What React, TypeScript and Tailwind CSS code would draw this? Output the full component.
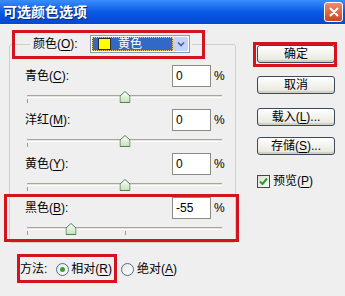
import React from "react";

function Key({ children }: { children: React.ReactNode }) {
  return <span className="underline underline-offset-[2px]">{children}</span>;
}

function RedFrame({ className }: { className: string }) {
  return <div className={`pointer-events-none absolute border-[3px] border-[#d3131d] ${className}`} />;
}

function Thumb() {
  return (
    <svg width="11" height="12" viewBox="0 0 11 12">
      <defs>
        <linearGradient id="th" x1="0" y1="0" x2="0" y2="1">
          <stop offset="0" stopColor="#ffffff" />
          <stop offset="1" stopColor="#bfe3b4" />
        </linearGradient>
      </defs>
      <path d="M5.5 0.5 L10.5 5 L10.5 11.5 L0.5 11.5 L0.5 5 Z" fill="url(#th)" stroke="#5d7a5d" />
    </svg>
  );
}

function Slider({ value }: { value: number }) {
  const pct = 50 + value / 2;
  return (
    <div className="relative ml-[17px] mr-[13px] h-[22px]">
      <div className="absolute inset-x-0 top-[8px] h-[3px] border-t border-b border-t-[#a7a69e] border-b-white bg-[#e4e3dc]" />
      <div className="absolute left-0 top-[12px] h-[4px] w-px bg-[#9a9a92]" />
      <div className="absolute left-1/2 top-[12px] h-[4px] w-px bg-[#9a9a92]" />
      <div className="absolute top-[4px] -translate-x-1/2" style={{ left: `${pct}%` }}>
        <Thumb />
      </div>
    </div>
  );
}

function Channel({ name, k, value }: { name: string; k: string; value: number }) {
  return (
    <div>
      <div className="flex h-[22px] items-center pl-[15px]">
        <span className="flex-1">
          {name}(<Key>{k}</Key>):
        </span>
        <div className="flex h-[22px] w-[39px] items-center border border-[#8c8c86] bg-white pl-[3px]">{value}</div>
        <span className="w-[24px] pl-[3px]">%</span>
      </div>
      <Slider value={value} />
    </div>
  );
}

function Button({ children }: { children: React.ReactNode }) {
  return (
    <div className="flex h-[18px] w-[78px] items-center justify-center rounded-[3px] border border-[#3c4a5c] bg-gradient-to-b from-white to-[#e6e5dc] shadow-[inset_0_-2px_0_#d2d0c3]">
      {children}
    </div>
  );
}

function Radio({ checked }: { checked?: boolean }) {
  return (
    <div className="flex h-[13px] w-[13px] items-center justify-center rounded-full border border-[#4d6e8c] bg-gradient-to-br from-[#e8e7e0] to-white">
      {checked && <div className="h-[5px] w-[5px] rounded-full bg-[#3c9a3c]" />}
    </div>
  );
}

export default function App() {
  const channels = [
    { name: "青色", k: "C", value: 0 },
    { name: "洋红", k: "M", value: 0 },
    { name: "黄色", k: "Y", value: 0 },
  ];

  return (
    <div className="relative flex h-[296px] w-[345px] flex-col overflow-hidden bg-[#efefef] font-['Liberation_Sans','Noto_Sans_CJK_SC',sans-serif] text-[12px] text-black">
      <div className="flex h-[25px] items-center justify-between border-b border-[#f6f6f6] bg-gradient-to-b from-[#3a8dfb] via-[#0a58e6] to-[#0448d2] pl-[3px] pr-[2px]">
        <span className="text-[14px] font-bold text-white [text-shadow:1px_1px_0_#0a2a7a]">可选颜色选项</span>
        <div className="flex h-[20px] w-[19px] items-center justify-center rounded-[3px] border border-white bg-gradient-to-b from-[#ee8a6a] to-[#cc4220]">
          <svg width="10" height="10" viewBox="0 0 10 10">
            <path d="M1.5 1.5 L8.5 8.5 M8.5 1.5 L1.5 8.5" stroke="white" strokeWidth="2" strokeLinecap="round" />
          </svg>
        </div>
      </div>

      <div className="flex">
        <div className="w-[236px] pl-[9px]">
          <div className="relative mt-[19px] rounded-[3px] border border-[#cfcfc6] pb-[1px]">
            <div className="-mt-[10px] flex h-[18px] items-center">
              <div className="ml-[20px] flex h-[18px] items-center bg-[#efefef] pl-[3px] pr-[2px]">
                <span className="w-[57px]">
                  颜色(<Key>O</Key>):
                </span>
                <div className="flex h-[18px] w-[100px] items-center border border-[#7f9db9] bg-white p-px">
                  <div className="flex h-full flex-1 items-center border border-dotted border-[#f4c26a] bg-[#316ac5] pl-[5px] text-white">
                    <div className="h-[12px] w-[13px] border border-[#2a2a2a] bg-[#ffff00]" />
                    <span className="ml-[7px]">黄色</span>
                  </div>
                  <div className="flex h-full w-[15px] items-center justify-center rounded-[2px] bg-[#c3d3fd]">
                    <svg width="8" height="6" viewBox="0 0 8 6">
                      <path d="M1 1.5 L4 4.5 L7 1.5" fill="none" stroke="#4d6185" strokeWidth="1.6" />
                    </svg>
                  </div>
                </div>
              </div>
            </div>
            <RedFrame className="left-[2px] -top-[15px] h-[29px] w-[193px]" />
            <div className="mt-[12px]">
              {channels.map((c) => (
                <Channel key={c.k} name={c.name} k={c.k} value={c.value} />
              ))}
              <div className="relative">
                <div className="flex h-[22px] items-center pl-[15px]">
                  <span className="flex-1">
                    黑色(<Key>B</Key>):
                  </span>
                  <div className="flex h-[22px] w-[39px] items-center border border-[#8c8c86] bg-white pl-[3px]">-55</div>
                  <span className="w-[24px] pl-[3px]">%</span>
                </div>
                <Slider value={-55} />
                <RedFrame className="-left-[6px] -top-[3px] -right-[4px] -bottom-[1px]" />
              </div>
            </div>
          </div>

          <div className="relative ml-[11px] mt-[16px] flex h-[20px] items-center">
            <span>方法:</span>
            <div className="ml-[9px]">
              <Radio checked />
            </div>
            <span className="ml-[2px]">
              相对(<Key>R</Key>)
            </span>
            <div className="ml-[9px]">
              <Radio />
            </div>
            <span className="ml-[3px]">
              绝对(<Key>A</Key>)
            </span>
            <RedFrame className="-left-[3px] -top-[5px] h-[29px] w-[100px]" />
          </div>
        </div>

        <div className="ml-[21px] flex flex-col pt-[20px]">
          <div className="relative">
            <Button>确定</Button>
            <RedFrame className="-left-[4px] -top-[3px] -right-[2px] -bottom-[4px]" />
          </div>
          <div className="mt-[13px]">
            <Button>取消</Button>
          </div>
          <div className="mt-[14px]">
            <Button>
              载入(<Key>L</Key>)...
            </Button>
          </div>
          <div className="mt-[11px]">
            <Button>
              存储(<Key>S</Key>)...
            </Button>
          </div>
          <div className="mt-[17px] flex items-center">
            <div className="flex h-[13px] w-[13px] items-center justify-center border border-[#1c5180] bg-gradient-to-br from-[#dcdcd6] to-white">
              <svg width="9" height="9" viewBox="0 0 9 9">
                <path d="M1 4.5 L3.5 7 L8 1.5" fill="none" stroke="#21a121" strokeWidth="2" />
              </svg>
            </div>
            <span className="ml-[3px]">
              预览(<Key>P</Key>)
            </span>
          </div>
        </div>
      </div>
    </div>
  );
}
